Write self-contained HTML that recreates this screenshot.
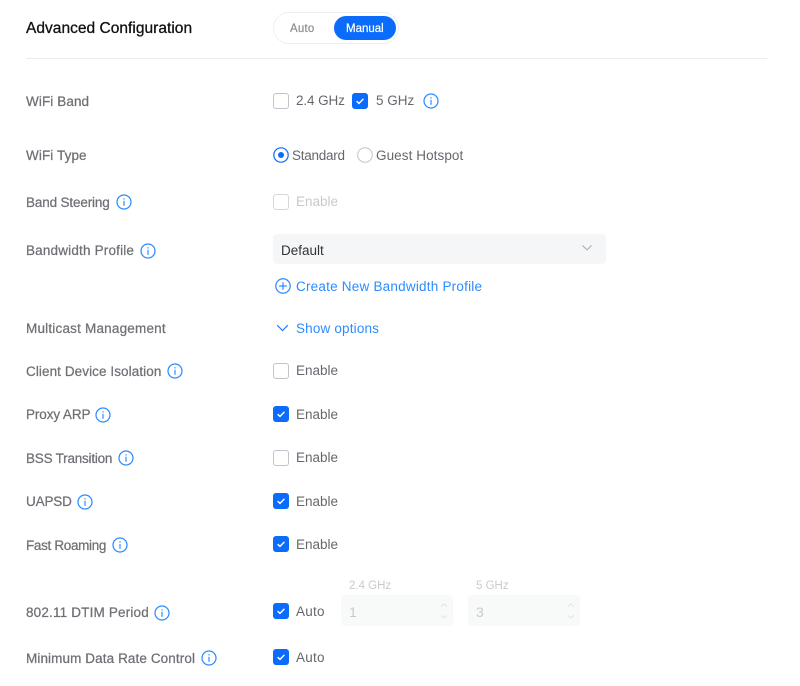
<!DOCTYPE html>
<html><head><meta charset="utf-8">
<style>
html,body{margin:0;padding:0;background:#fff}
#p{position:relative;width:800px;height:686px;overflow:hidden;font-family:"Liberation Sans",sans-serif;font-size:13.5px;color:#6b6d73}
#p span.t{position:absolute;white-space:nowrap;line-height:18px;height:18px}
.l{left:26px;color:#6e7075;-webkit-text-stroke:.25px #6e7075}
.v{left:296px;color:#66686e}
.cb{position:absolute;left:273px;width:14px;height:14px;border:1px solid #c1c4cc;border-radius:3px;background:#fff}
.on{width:16px;height:16px;border:0;background:#0b6cfb;border-radius:3px}
.on svg{position:absolute;left:0;top:0}
svg.i{position:absolute;width:16px;height:16px}
</style></head><body><div id="p">
<svg width="0" height="0" style="position:absolute"><defs>
<symbol id="info" viewBox="0 0 16 16"><circle cx="8" cy="8" r="7" fill="none" stroke="#2d8cff" stroke-width="1.25"/><rect x="7.4" y="6.8" width="1.2" height="5" fill="#2d8cff"/><rect x="7.4" y="4.2" width="1.2" height="1.3" fill="#2d8cff"/></symbol>
<symbol id="chk" viewBox="0 0 16 16"><path d="M4.6 8.2 7 10.4 11.4 5.9" fill="none" stroke="#fff" stroke-width="1.4"/></symbol>
</defs></svg>

<span class="t" style="left:26px;top:20px;font-size:15.5px;letter-spacing:.03px;color:#111;-webkit-text-stroke:.3px #111">Advanced Configuration</span>
<div style="position:absolute;left:273px;top:12px;width:126px;height:32px;box-sizing:border-box;border:1px solid #eeeff1;border-radius:16px"></div>
<div style="position:absolute;left:334px;top:16px;width:62px;height:24px;background:#0b6cfb;border-radius:12px"></div>
<span class="t" style="left:290px;top:20px;font-size:11.5px;letter-spacing:.2px;color:#8b8c91;-webkit-text-stroke:.2px #8b8c91">Auto</span>
<span class="t" style="left:346px;top:20px;font-size:11.5px;color:#fff;-webkit-text-stroke:.2px #fff">Manual</span>
<div style="position:absolute;left:26px;top:58px;width:741px;height:1px;background:#ededf0"></div>

<span class="t l" style="top:93px;letter-spacing:.1px">WiFi Band</span>
<div class="cb" style="top:93px"></div><span class="t v" style="top:92px;letter-spacing:-.1px">2.4 GHz</span>
<div class="cb on" style="left:352px;top:93px"><svg width="16" height="16"><use href="#chk"/></svg></div><span class="t v" style="left:376px;top:92px">5 GHz</span>
<svg class="i" style="left:423px;top:93px"><use href="#info"/></svg>

<span class="t l" style="top:147px;letter-spacing:.1px">WiFi Type</span>
<svg style="position:absolute;left:273px;top:147px" width="16" height="16"><circle cx="8" cy="8" r="7.2" fill="none" stroke="#0b6cfb" stroke-width="1.2"/><circle cx="8" cy="8" r="3" fill="#0b6cfb"/></svg>
<span class="t v" style="left:292px;top:147px;letter-spacing:-.25px">Standard</span>
<svg style="position:absolute;left:357px;top:147px" width="16" height="16"><circle cx="8" cy="8" r="7.3" fill="#fff" stroke="#c1c4cc" stroke-width="1"/></svg>
<span class="t v" style="left:376px;top:147px;letter-spacing:.08px">Guest Hotspot</span>

<span class="t l" style="top:194px;letter-spacing:-.15px">Band Steering</span>
<svg class="i" style="left:116px;top:194px"><use href="#info"/></svg>
<div class="cb" style="top:194px;border-color:#d5d7dc"></div><span class="t v" style="top:193px;color:#c9cacd">Enable</span>

<span class="t l" style="top:242px;letter-spacing:.18px">Bandwidth Profile</span>
<svg class="i" style="left:140px;top:243px"><use href="#info"/></svg>
<div style="position:absolute;left:273px;top:234px;width:333px;height:30px;background:#f5f6f7;border-radius:4px"></div>
<span class="t" style="left:281px;top:242px;color:#333;font-size:13.5px">Default</span>
<svg style="position:absolute;left:581px;top:244px" width="12" height="8"><path d="M1.5 1.5 6 5.8 10.5 1.5" fill="none" stroke="#a5a7ac" stroke-width="1"/></svg>

<svg style="position:absolute;left:275px;top:278px" width="16" height="16"><circle cx="8" cy="8" r="7.2" fill="none" stroke="#2d8cff" stroke-width="1.25"/><path d="M8 4.2V11.8M4.2 8H11.8" stroke="#2d8cff" stroke-width="1.25"/></svg>
<span class="t" style="left:296px;top:278px;letter-spacing:.22px;color:#2d8cff">Create New Bandwidth Profile</span>

<span class="t l" style="top:320px;letter-spacing:.2px">Multicast Management</span>
<svg style="position:absolute;left:276px;top:324px" width="14" height="9"><path d="M1.2 1.2 6.5 6.5 11.8 1.2" fill="none" stroke="#1f7dfb" stroke-width="1.2"/></svg>
<span class="t" style="left:296px;top:320px;letter-spacing:.17px;color:#2d8cff">Show options</span>

<span class="t l" style="top:363px;letter-spacing:.08px">Client Device Isolation</span>
<svg class="i" style="left:167px;top:363px"><use href="#info"/></svg>
<div class="cb" style="top:363px"></div><span class="t v" style="top:362px">Enable</span>

<span class="t l" style="top:406px;letter-spacing:-.1px">Proxy ARP</span>
<svg class="i" style="left:95px;top:407px"><use href="#info"/></svg>
<div class="cb on" style="top:406px"><svg width="16" height="16"><use href="#chk"/></svg></div><span class="t v" style="top:406px">Enable</span>

<span class="t l" style="top:450px;letter-spacing:-.22px">BSS Transition</span>
<svg class="i" style="left:118px;top:450px"><use href="#info"/></svg>
<div class="cb" style="top:450px"></div><span class="t v" style="top:449px">Enable</span>

<span class="t l" style="top:493px;letter-spacing:-.15px">UAPSD</span>
<svg class="i" style="left:77px;top:494px"><use href="#info"/></svg>
<div class="cb on" style="top:493px"><svg width="16" height="16"><use href="#chk"/></svg></div><span class="t v" style="top:493px">Enable</span>

<span class="t l" style="top:537px;letter-spacing:-.33px">Fast Roaming</span>
<svg class="i" style="left:112px;top:537px"><use href="#info"/></svg>
<div class="cb on" style="top:536px"><svg width="16" height="16"><use href="#chk"/></svg></div><span class="t v" style="top:536px">Enable</span>

<span class="t" style="left:349px;top:577px;font-size:11.5px;color:#c9cacd">2.4 GHz</span>
<span class="t" style="left:476px;top:577px;font-size:11.5px;color:#c9cacd">5 GHz</span>
<span class="t l" style="top:604px;letter-spacing:.17px">802.11 DTIM Period</span>
<svg class="i" style="left:154px;top:605px"><use href="#info"/></svg>
<div class="cb on" style="top:603px"><svg width="16" height="16"><use href="#chk"/></svg></div><span class="t v" style="top:603px;letter-spacing:.25px">Auto</span>
<div style="position:absolute;left:341px;top:595px;width:112px;height:31px;background:#f8f9f9;border-radius:4px"></div>
<span class="t" style="left:349px;top:603px;color:#c9cacd;font-size:14px">1</span>
<svg style="position:absolute;left:439px;top:603px" width="10" height="16"><path d="M2 3.5 5 1 8 3.5M2 12.5 5 15 8 12.5" fill="none" stroke="#e2e3e5" stroke-width="1"/></svg>
<div style="position:absolute;left:468px;top:595px;width:112px;height:31px;background:#f8f9f9;border-radius:4px"></div>
<span class="t" style="left:476px;top:603px;color:#c9cacd;font-size:14px">3</span>
<svg style="position:absolute;left:566px;top:603px" width="10" height="16"><path d="M2 3.5 5 1 8 3.5M2 12.5 5 15 8 12.5" fill="none" stroke="#e2e3e5" stroke-width="1"/></svg>

<span class="t l" style="top:650px;letter-spacing:.1px">Minimum Data Rate Control</span>
<svg class="i" style="left:201px;top:650px"><use href="#info"/></svg>
<div class="cb on" style="top:649px"><svg width="16" height="16"><use href="#chk"/></svg></div><span class="t v" style="top:649px;letter-spacing:.25px">Auto</span>
</div></body></html>
